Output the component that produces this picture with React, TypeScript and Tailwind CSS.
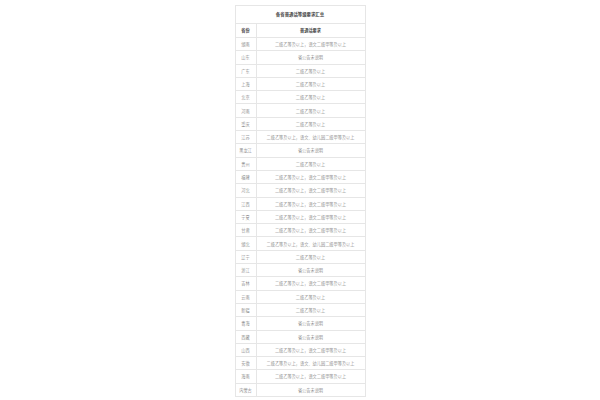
import React from "react";

const A = "二级乙等及以上";
const B = "二级乙等及以上，语文二级甲等及以上";
const C = "二级乙等及以上，语文、幼儿园二级甲等及以上";
const N = "省公告未说明";

const rows: [string, string][] = [
  ["湖南", B],
  ["山东", N],
  ["广东", A],
  ["上海", A],
  ["北京", A],
  ["河南", A],
  ["重庆", A],
  ["江苏", C],
  ["黑龙江", N],
  ["贵州", A],
  ["福建", B],
  ["河北", B],
  ["江西", B],
  ["宁夏", B],
  ["甘肃", B],
  ["湖北", C],
  ["辽宁", A],
  ["浙江", N],
  ["吉林", B],
  ["云南", A],
  ["新疆", A],
  ["青海", N],
  ["西藏", N],
  ["山西", B],
  ["安徽", C],
  ["海南", B],
  ["内蒙古", N],
];

export default function App() {
  return (
    <div
      className="w-[600px] h-[400px] bg-white flex justify-center pt-[5px]"
      style={{ fontFamily: '"Noto Sans CJK SC", "Liberation Serif", serif' }}
    >
      <table className="w-[131px] border-collapse table-fixed self-start">
        <colgroup>
          <col className="w-[21px]" />
          <col />
        </colgroup>
        <tbody>
          <tr className="h-[18px]">
            <td
              colSpan={2}
              className="border border-[#e6e6e6] text-center text-[4.4px] font-bold text-[#444] leading-none p-0"
            >
              各省普通话等级要求汇总
            </td>
          </tr>
          <tr className="h-[14px]">
            <td className="border border-[#e6e6e6] text-center text-[4.2px] font-bold text-[#444] leading-none p-0">
              省份
            </td>
            <td className="border border-[#e6e6e6] text-center text-[4.2px] font-bold text-[#444] leading-none p-0">
              普通话要求
            </td>
          </tr>
          {rows.map(([p, r]) => (
            <tr key={p} className="h-[13.3px]">
              <td className="border border-[#e6e6e6] text-center text-[4.2px] font-light text-[#666] leading-none p-0">
                {p}
              </td>
              <td className="border border-[#e6e6e6] text-center text-[4.2px] font-light text-[#666] leading-none p-0">
                {r}
              </td>
            </tr>
          ))}
        </tbody>
      </table>
    </div>
  );
}
